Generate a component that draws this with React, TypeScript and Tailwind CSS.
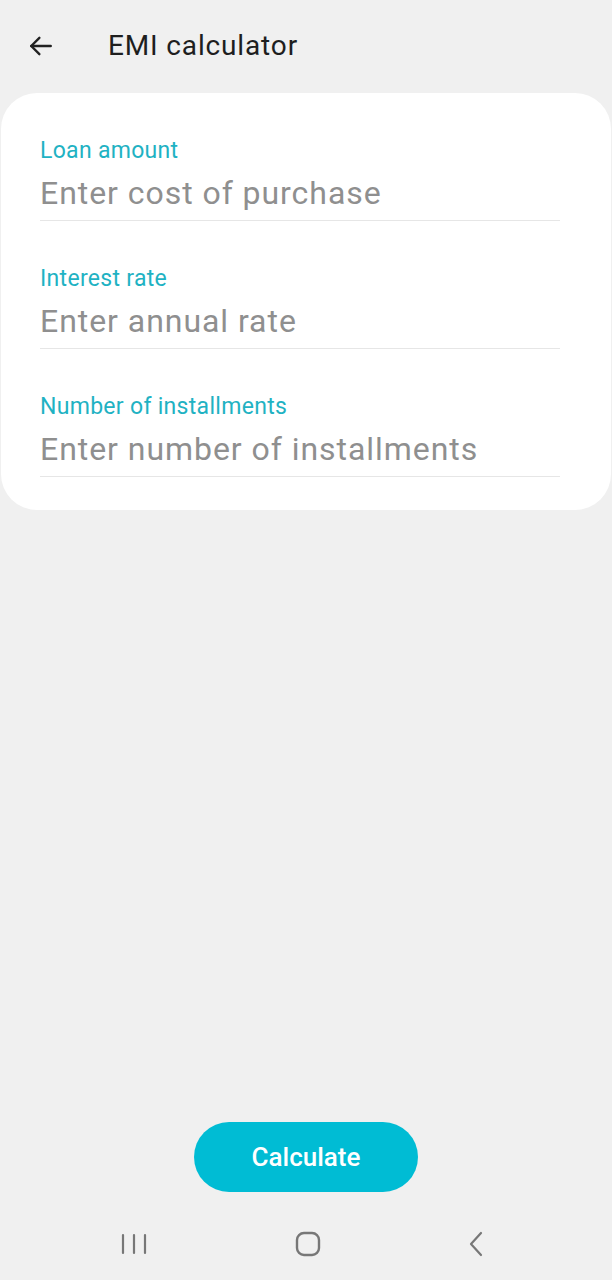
import React from "react";

const fields = [
  { label: "Loan amount", placeholder: "Enter cost of purchase" },
  { label: "Interest rate", placeholder: "Enter annual rate" },
  { label: "Number of installments", placeholder: "Enter number of installments" },
];

function Field({ label, placeholder }: { label: string; placeholder: string }) {
  return (
    <div className="flex flex-col border-b border-[#e6e6e6] pb-[8px]">
      <span className="pt-[1px] text-[23px] leading-[24px] tracking-[0.3px] text-[#1fb2c3]">{label}</span>
      <input
        className="mt-[11px] h-[38px] w-full bg-transparent text-[32px] leading-[38px] tracking-[0.95px] text-[#333] outline-none placeholder:text-[#8f8f8f]"
        placeholder={placeholder}
      />
    </div>
  );
}

export default function App() {
  return (
    <div
      className="flex min-h-[1280px] w-full flex-col bg-[#f0f0f0]"
      style={{ fontFamily: "Roboto, 'Noto Sans', sans-serif" }}
    >
      {/* top bar */}
      <div className="flex h-[93px] items-center pl-[28px] pb-[2px]">
        <svg width="26" height="26" viewBox="0 0 24 24" fill="none" stroke="#222" strokeWidth="2.2" strokeLinecap="round" strokeLinejoin="round">
          <path d="M21 12H3" />
          <path d="M10.5 4.5 3 12l7.5 7.5" />
        </svg>
        <h1 className="ml-[54px] text-[28px] leading-[32px] tracking-[0.85px] text-[#1e1e1e]">EMI calculator</h1>
      </div>

      {/* form card */}
      <div className="mx-[1px] flex flex-col gap-[45px] rounded-[36px] bg-white px-[39px] pt-[45px] pb-[33px] pr-[51px]">
        {fields.map((f) => (
          <Field key={f.label} label={f.label} placeholder={f.placeholder} />
        ))}
      </div>

      <div className="flex-1" />

      <div className="flex justify-center pb-[16px]">
        <button className="h-[70px] w-[224px] rounded-full bg-[#00bcd4] pt-[1px] text-[26px] font-medium text-white">
          Calculate
        </button>
      </div>

      {/* system nav */}
      <div className="flex h-[72px] items-center justify-between pl-[120px] pr-[128px]">
        <svg width="28" height="24" viewBox="0 0 28 24" fill="none" stroke="#777" strokeWidth="2.2" strokeLinecap="round">
          <path d="M3 3v18M14 3v18M25 3v18" />
        </svg>
        <svg width="26" height="26" viewBox="0 0 26 26" fill="none" stroke="#777" strokeWidth="2.4">
          <rect x="2" y="2" width="22" height="22" rx="7" />
        </svg>
        <svg width="16" height="26" viewBox="0 0 16 26" fill="none" stroke="#777" strokeWidth="2.2" strokeLinecap="round" strokeLinejoin="round">
          <path d="M13 2 3 13l10 11" />
        </svg>
      </div>
    </div>
  );
}
